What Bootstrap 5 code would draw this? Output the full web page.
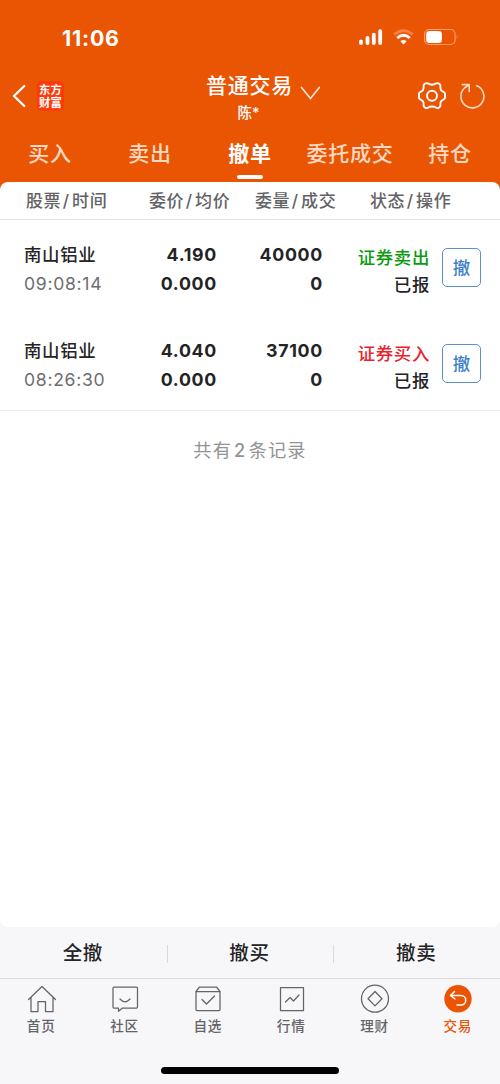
<!DOCTYPE html>
<html lang="zh-CN">
<head>
<meta charset="utf-8">
<meta name="viewport" content="width=device-width, initial-scale=1">
<title>普通交易 - 撤单</title>
<link href="https://cdn.jsdelivr.net/npm/bootstrap@5.3.0/dist/css/bootstrap.min.css" rel="stylesheet">
<style>
:root{--brand:#ea5504}
body{font-family:Inter,"Noto Sans CJK SC",sans-serif;height:1084px;background:#f7f7f9;color:#242426;letter-spacing:.7px;overflow:hidden}
svg{display:block;fill:none;stroke-linecap:round;stroke-linejoin:round;flex:none}
.top{background:var(--brand);height:190px}
.statusbar{height:64px;padding:20px 42px 0 62px}
.clock{font-size:21.3px;line-height:36px;letter-spacing:.8px}
.titlebar{height:66px;display:grid;grid-template-columns:1fr auto 1fr;padding:0 15px 2px 12px}
.logo{width:27px;height:30px;background:#fb3b0a;border-radius:5px;font:700 11.3px/13.5px "Noto Sans CJK SC",sans-serif;letter-spacing:.2px;margin-left:11px}
.page-title{font-size:21px;line-height:24px;font-weight:500;left:1px;margin-top:10px}
.account{font-size:14.5px;line-height:20px;letter-spacing:0;font-weight:500;margin-top:5px}
.tabs{height:52px}
.tabs a{font-size:21px;line-height:48px;color:#ffd9c2;text-decoration:none;height:52px;flex:1;text-align:center;font-weight:500;white-space:nowrap}
.tabs a.active{color:#fff;font-weight:700}
.tabs a.active::after{content:"";display:block;width:26px;height:4px;border-radius:2px;background:#fff;margin:-3px auto 0}
.sheet{background:#fff;height:745px;margin-top:-8px;border-radius:8px}
.order-grid{display:grid;grid-template-columns:124px 93px 106px 107px 1fr}
.heads{display:grid;grid-template-columns:107.5px 123px 106px 115px;height:38px;line-height:38px;font-size:17px;color:#636366;font-weight:500;border-bottom:1px solid #e5e5e7}
.heads i{font-style:normal;margin:0 2.3px 0 1.5px}
.order{height:95.5px;padding-top:20px;font-size:17.4px;line-height:29px;font-weight:500}
.order + .order{padding-top:20.5px}
.num{font-weight:700;font-size:17.8px}
.time{color:#6d6d70;font-size:17.6px;font-weight:400}
.state{padding-top:4px;line-height:27px}
.sell{color:#0a9b0e}.buy{color:#e8232d}
.cancel{width:39px;height:39px;border:1px solid #5b8fce;border-radius:5px;color:#3c7fc9;font-size:17.4px;line-height:36px;font-weight:500;background:#fff;margin:8px 0 0 12px;letter-spacing:0;padding:0}
.records{border-top:1px solid #efeff0;color:#939395;font-size:18.2px;line-height:78px;letter-spacing:1.1px;font-weight:400;margin-top:-1px}
.records b{font-weight:500;margin:0 2.5px 0 2px}
.bulk{height:52px;border-bottom:1px solid #dbdbdf;font-size:19.5px;font-weight:500;line-height:53px}
.bulk>*{text-indent:-1px}
.bulk>*+*{background:linear-gradient(#dadadd,#dadadd) left center/1px 18px no-repeat}
.dock{height:105px;font-size:13.6px;color:#646468;font-weight:500}
.dock svg{stroke:#646468;stroke-width:1.25;width:30px;height:30px;margin:5px auto 0}
.dock span{line-height:22px;display:block;margin-top:1px;text-indent:-1px}
.dock .current{color:var(--brand)}
.home-bar{width:178px;height:7px;border-radius:4px;background:#000;left:161px;bottom:10px}
</style>
</head>
<body>
<header class="top text-white">
  <div class="statusbar d-flex justify-content-between">
    <span class="clock fw-bold">11:06</span>
    <svg width="100" height="34" viewBox="0 0 100 34">
      <path d="M3 23V21.3M9.5 23V18M15.8 23V14.7M22.2 23V11.2" stroke="#fff" stroke-width="3.8"/>
      <g stroke-width="2.6" stroke-linecap="butt"><path d="M36.3 14.6Q45.5 6.5 54.7 14.6" stroke="#f98145"/><path d="M39.2 18Q45.5 12.4 51.8 18" stroke="#fff" stroke-width="2.8"/></g>
      <path d="M45.5 24.4L42.4 21.2Q45.5 18.8 48.6 21.2Z" fill="#fff"/>
      <rect x="66.6" y="9.5" width="30.5" height="15" rx="4.5" stroke="#ff9c67" stroke-width="1.2"/>
      <rect x="68.2" y="11" width="15.7" height="12" rx="3.2" fill="#fff"/><path d="M98.8 15v4q1.4-2 0-4" fill="#ff9c67"/>
    </svg>
  </div>
  <div class="titlebar">
    <div class="d-flex align-items-center">
      <svg width="14" height="24" viewBox="0 0 14 24"><path d="M12.3 2L2 12L12.3 22" stroke="#fff" stroke-width="2.3"/></svg>
      <div class="logo d-flex align-items-center justify-content-center"><span>东方<br>财富</span></div>
    </div>
    <div class="text-center">
      <div class="page-title position-relative">普通交易
        <svg class="position-absolute" style="left:94px;top:12px" width="21" height="15" viewBox="0 0 21 15"><path d="M1.5 1.5L10.5 12.5L19.3 1.5" stroke="#ffe5d6" stroke-width="1.7"/></svg>
      </div>
      <div class="account">陈*</div>
    </div>
    <div class="d-flex justify-content-end align-items-center gap-2">
      <svg class="me-1" width="30" height="30" viewBox="0 0 30 30" stroke="#fff" stroke-width="1.9"><path d="M8.3 2.6Q9.4 1.8 10.6 2.4Q15 5 19.4 2.4Q20.6 1.8 21.7 2.6L23 3.6Q23.7 4.3 23.4 5.5Q22.7 9.5 26.8 11Q28 11.6 28 12.8V16.5Q28 17.7 26.8 18.3Q22.7 20 23.4 23.8Q23.7 25 23 25.7L21.7 26.7Q20.6 27.5 19.4 26.8Q15 24.3 10.6 26.8Q9.4 27.5 8.3 26.7L7 25.7Q6.3 25 6.6 23.8Q7.3 20 3.2 18.3Q2 17.7 2 16.5V12.8Q2 11.6 3.2 11Q7.3 9.5 6.6 5.5Q6.3 4.3 7 3.6Z"/><circle cx="15" cy="14.7" r="5"/></svg>
      <svg width="26" height="28" viewBox="0 0 26 28" stroke="#ffdac6" stroke-width="1.6"><path d="M17.8 3.7A11.5 11.5 0 1 1 5.5 6L10 2.8M3.2 2.6H10.2V9.6"/></svg>
    </div>
  </div>
  <nav class="tabs d-flex">
    <a href="#">买入</a><a href="#">卖出</a><a href="#" class="active">撤单</a><a href="#">委托成交</a><a href="#">持仓</a>
  </nav>
</header>
<main class="sheet">
  <div class="heads text-end"><span>股票<i>/</i>时间</span><span>委价<i>/</i>均价</span><span>委量<i>/</i>成交</span><span>状态<i>/</i>操作</span></div>
  <div class="order order-grid text-end">
    <div class="text-start ps-4"><div>南山铝业</div><div class="time">09:08:14</div></div>
    <div class="num"><div>4.190</div><div>0.000</div></div>
    <div class="num"><div>40000</div><div>0</div></div>
    <div class="state"><div class="sell">证券卖出</div><div>已报</div></div>
    <div class="text-start"><button class="cancel">撤</button></div>
  </div>
  <div class="order order-grid text-end">
    <div class="text-start ps-4"><div>南山铝业</div><div class="time">08:26:30</div></div>
    <div class="num"><div>4.040</div><div>0.000</div></div>
    <div class="num"><div>37100</div><div>0</div></div>
    <div class="state"><div class="buy">证券买入</div><div>已报</div></div>
    <div class="text-start"><button class="cancel">撤</button></div>
  </div>
  <div class="records text-center">共有<b>2</b>条记录</div>
</main>
<div class="bulk row g-0 text-center"><div class="col">全撤</div><div class="col">撤买</div><div class="col">撤卖</div></div>
<footer class="dock row g-0 text-center position-relative">
  <div class="col"><svg viewBox="0 0 30 30"><path d="M1.5 15.5L15 2.5L28.5 15.5M4 13.5V27.5H11V17.5H18.5V27.5H26V13.5"/></svg><span>首页</span></div>
  <div class="col"><svg viewBox="0 0 30 30"><path d="M4 3H26.5Q27.5 3 27.5 4V23Q27.5 24 26.5 24H12.5L8.5 27.3V24H4Q3 24 3 23V4Q3 3 4 3ZM10 15Q15 20.5 20 15"/></svg><span>社区</span></div>
  <div class="col"><svg viewBox="0 0 30 30"><path d="M3 7.5L6.5 3H23.5L27 7.5V25.5Q27 26.5 26 26.5H4Q3 26.5 3 25.5ZM3 7.5H27M9 15.5L13.5 20L21.5 12"/></svg><span>自选</span></div>
  <div class="col"><svg viewBox="0 0 30 30"><path d="M3.5 3.5H26.5V26.5H3.5ZM8.5 18L13 13.5L16.5 17L22 11"/></svg><span>行情</span></div>
  <div class="col"><svg viewBox="0 0 30 30"><circle cx="15" cy="14.7" r="13.5"/><path d="M15 7.5L22 14.7L15 21.9L8 14.7Z"/></svg><span>理财</span></div>
  <div class="col current"><svg viewBox="0 0 30 30"><circle cx="15" cy="14.7" r="13.7" fill="#ea5504" stroke="none"/><path d="M11.5 7.5L7.5 11.5L12 15M7.5 11.5H18A4.7 4.7 0 0 1 18 21H14" stroke="#fff" stroke-width="1.5"/></svg><span>交易</span></div>
  <div class="home-bar position-absolute p-0"></div>
</footer>
<script src="https://cdn.jsdelivr.net/npm/bootstrap@5.3.0/dist/js/bootstrap.bundle.min.js"></script>
</body>
</html>
